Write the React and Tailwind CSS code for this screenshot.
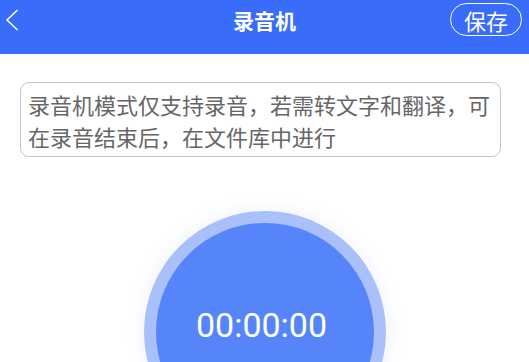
import React from 'react';

const cjk = { fontFamily: '"Noto Sans CJK SC", "Noto Sans", sans-serif' };

export default function App() {
  return (
    <div className="w-[529px] h-[362px] overflow-hidden bg-white" style={cjk}>
      <div className="relative h-[54px] bg-[#386cf9] flex items-start justify-center">
        <svg className="absolute left-[5px] top-[9px]" width="14" height="22" viewBox="0 0 14 22">
          <path d="M12.5 1 L2 11 L12.5 21" fill="none" stroke="white" strokeWidth="1.5" />
        </svg>
        <h1 className="mt-[5px] text-[21px] leading-[30px] font-bold text-white">录音机</h1>
        <button className="absolute left-[450px] top-[3px] w-[72px] h-[33px] rounded-full border-[1.5px] border-white text-white text-[22px] leading-[28px] flex items-center justify-center">
          保存
        </button>
      </div>

      <div className="pl-[20px] pr-[28px] pt-[28px]">
        <div className="rounded-[9px] border border-[#c4c4c4] pl-[7px] pr-[6px] pt-[5px] pb-[4px] text-[#666] text-[22px] leading-[32px]">
          录音机模式仅支持录音，若需转文字和翻译，可在录音结束后，在文件库中进行
        </div>
      </div>

      <div className="flex justify-center pt-[54px]">
        <div className="w-[242px] h-[242px] rounded-full bg-[#a9c0fa] shadow-[0_0_14px_6px_rgba(120,150,240,0.08)] flex items-center justify-center">
          <div className="w-[218px] h-[218px] rounded-full bg-[#5585f8] flex items-center justify-center">
            <span className="mt-[-14px] mr-[6px] text-white text-[34px]" style={{ fontFamily: 'Roboto, sans-serif' }}>00:00:00</span>
          </div>
        </div>
      </div>
    </div>
  );
}
